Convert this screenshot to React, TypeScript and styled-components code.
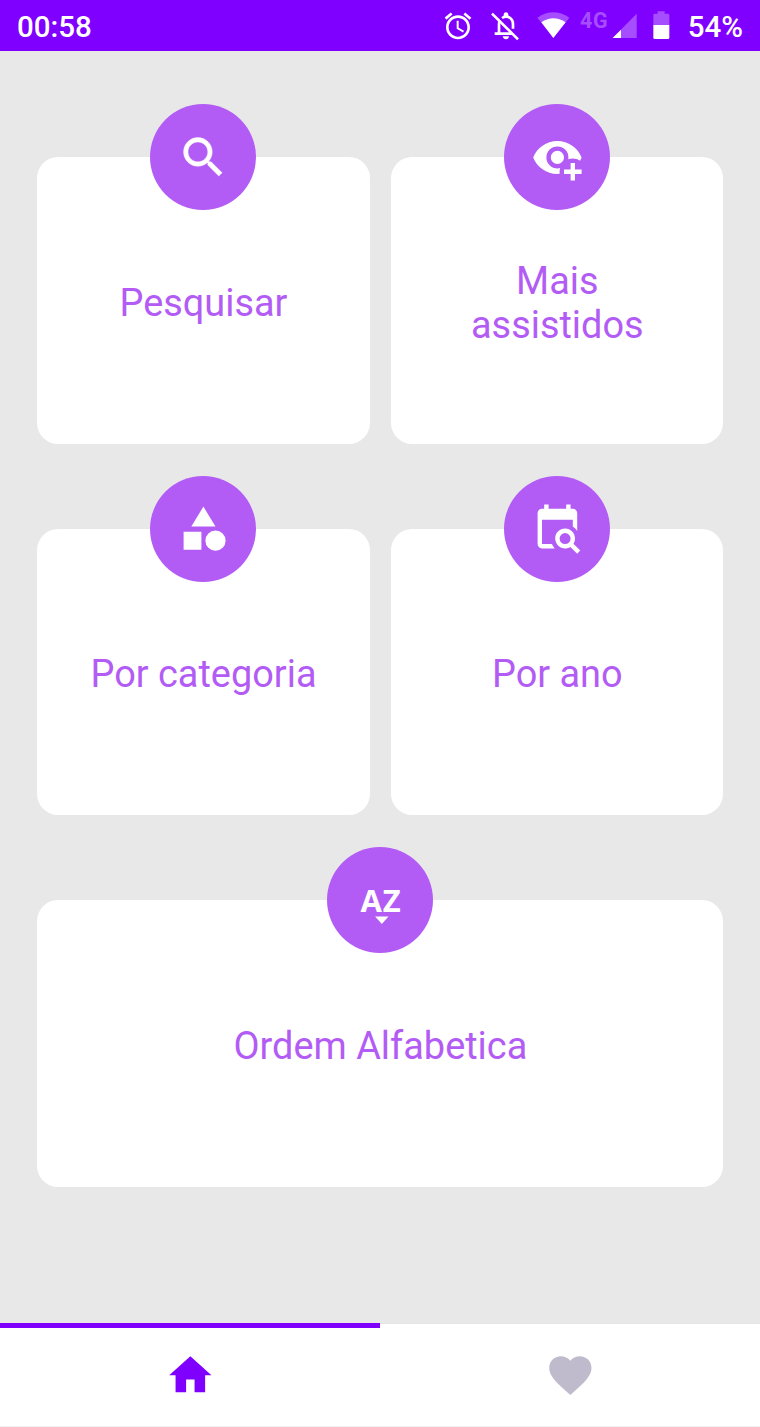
import React from 'react';
import styled, { createGlobalStyle } from 'styled-components';

const GlobalStyle = createGlobalStyle`
  * { box-sizing: border-box; }
  body { margin: 0; background: #e8e8e8; font-family: Roboto, sans-serif; }
`;

const Screen = styled.div`
  display: flex;
  flex-direction: column;
  width: 760px;
  height: 1427px;
  background: #e8e8e8;
  overflow: hidden;
`;

const StatusBar = styled.header`
  display: flex;
  justify-content: space-between;
  align-items: center;
  height: 51px;
  flex: none;
  padding: 0 17px;
  background: #8000ff;
  color: #fff;
`;

const StatusText = styled.span`
  font-size: 29.5px;
  font-weight: 500;
  line-height: 36px;
  padding-top: 2px;
`;

const StatusIcons = styled.div`
  display: flex;
  align-items: center;
`;

const StatusGlyph = styled.svg<{ $gap: number }>`
  display: block;
  flex: none;
  margin-right: ${({ $gap }) => $gap}px;
`;

const NetworkType = styled.span`
  width: 31.8px;
  height: 32px;
  font-size: 21.5px;
  font-weight: 700;
  line-height: 21px;
  letter-spacing: 0.8px;
  color: #a64dff;
`;

const Menu = styled.main`
  flex: 1;
  display: grid;
  grid-template-columns: repeat(2, minmax(0, 1fr));
  grid-auto-rows: 286.5px;
  align-content: start;
  gap: 85.1px 21.6px;
  padding: 106px 36.6px 0 37.4px;
`;

const Card = styled.button<{ $wide?: boolean }>`
  position: relative;
  display: flex;
  align-items: center;
  justify-content: center;
  grid-column: ${({ $wide }) => ($wide ? '1 / -1' : 'auto')};
  border: 0;
  border-radius: 21px;
  padding: 5.5px 60px 0;
  background: #fff;
  font-family: inherit;
`;

const CardLabel = styled.span<{ $nowrap: boolean }>`
  font-size: 37.9px;
  line-height: 44.5px;
  color: #b35cf5;
  text-align: center;
  white-space: ${({ $nowrap }) => ($nowrap ? 'nowrap' : 'normal')};
`;

const Badge = styled.span`
  position: absolute;
  top: -53px;
  left: 50%;
  display: flex;
  align-items: center;
  justify-content: center;
  width: 106px;
  height: 106px;
  transform: translateX(-50%);
  border-radius: 50%;
  background: #b35cf5;
`;

const BadgeIcon = styled.svg`
  display: block;
  width: 52.8px;
  height: 52.8px;
  fill: #fff;
`;

const SortText = styled.text`
  font-family: 'Open Sans', sans-serif;
  font-size: 14.1px;
  font-weight: 700;
`;

const TabBar = styled.nav`
  display: flex;
  flex: none;
  height: 104px;
  background: #fff;
  border-bottom: 1px solid #f0f0f0;
`;

const Tab = styled.button<{ $active?: boolean }>`
  flex: 1;
  display: flex;
  align-items: center;
  justify-content: center;
  border: 0;
  border-top: ${({ $active }) => ($active ? '5px solid #8000ff' : '1px solid #e4e4e4')};
  padding: ${({ $active }) => ($active ? '0 0 3px' : '1px 0 0')};
  background: transparent;
  color: ${({ $active }) => ($active ? '#8000ff' : '#c0bbcc')};
`;

const TabIcon = styled.svg`
  display: block;
  width: 50.7px;
  height: 50.7px;
  fill: currentColor;
`;

const items = [
  {
    label: 'Pesquisar',
    icon: (
      <path d="M15.5 14h-.79l-.28-.27C15.41 12.59 16 11.11 16 9.5 16 5.91 13.09 3 9.5 3S3 5.91 3 9.5 5.91 16 9.5 16c1.61 0 3.09-.59 4.23-1.57l.27.28v.79l5 4.99L20.49 19l-4.99-5zm-6 0C7.01 14 5 11.99 5 9.5S7.01 5 9.5 5 14 7.01 14 9.5 11.99 14 9.5 14z" stroke="#fff" strokeWidth=".2" />
    ),
  },
  {
    label: 'Mais assistidos',
    wrap: true,
    icon: (
      <path d="M12,4.5C7,4.5 2.73,7.61 1,12C2.73,16.39 7,19.5 12,19.5C12.36,19.5 12.72,19.5 13.08,19.45C13.03,19.13 13,18.82 13,18.5C13,17.94 13.08,17.38 13.24,16.84C12.83,16.94 12.42,17 12,17A5,5 0 0,1 7,12A5,5 0 0,1 12,7A5,5 0 0,1 17,12C17,12.29 16.97,12.59 16.92,12.88C17.58,12.63 18.29,12.5 19,12.5C20.17,12.5 21.31,12.84 22.29,13.5C22.56,13 22.8,12.5 23,12C21.27,7.61 17,4.5 12,4.5M12,9A3,3 0 0,0 9,12A3,3 0 0,0 12,15A3,3 0 0,0 15,12A3,3 0 0,0 12,9M18,14.5V17.5H15V19.5H18V22.5H20V19.5H23V17.5H20V14.5H18Z" />
    ),
  },
  {
    label: 'Por categoria',
    icon: (
      <path d="M11.1,13.5V21.7H3V13.5H11.1M12,2.1L17.5,11.1H6.5L12,2.1M17.5,13A4.6,4.6 0 0,1 17.5,22.2A4.6,4.6 0 0,1 17.5,13Z" />
    ),
  },
  {
    label: 'Por ano',
    icon: (
      <path transform="translate(0 .1)" d="M15.5,12C18,12 20,14 20,16.5C20,17.38 19.75,18.21 19.31,18.9L22.39,22L21,23.39L17.88,20.32C17.19,20.75 16.37,21 15.5,21C13,21 11,19 11,16.5C11,14 13,12 15.5,12M15.5,14A2.5,2.5 0 0,0 13,16.5A2.5,2.5 0 0,0 15.5,19A2.5,2.5 0 0,0 18,16.5A2.5,2.5 0 0,0 15.5,14M19,8H5V19H9.5C9.81,19.75 10.26,20.42 10.81,21H5C3.89,21 3,20.1 3,19V5C3,3.89 3.89,3 5,3H6V1H8V3H16V1H18V3H19A2,2 0 0,1 21,5V13.03C20.5,12.22 19.8,11.54 19,11V8Z" />
    ),
  },
  {
    label: 'Ordem Alfabetica',
    wide: true,
    icon: (
      <>
        <SortText x="3 13.1" y="17.3">AZ</SortText>
        <path d="M9.6 19.3h6.1l-3.05 3.4z" />
      </>
    ),
  },
];

export default function App() {
  return (
    <>
      <GlobalStyle />
      <Screen>
        <StatusBar>
          <StatusText>00:58</StatusText>
          <StatusIcons>
            <StatusGlyph $gap={16} width="32" height="32" viewBox="0 0 24 24" fill="#fff">
              <path d="M22 5.72l-4.6-3.86-1.29 1.53 4.6 3.86L22 5.72zM7.88 3.39L6.6 1.86 2 5.71l1.29 1.53 4.59-3.85zM12.5 8H11v6l4.75 2.85.75-1.23-4-2.37V8zM12 4c-4.97 0-9 4.03-9 9s4.02 9 9 9c4.97 0 9-4.03 9-9s-4.03-9-9-9zm0 16c-3.87 0-7-3.13-7-7s3.13-7 7-7 7 3.13 7 7-3.13 7-7 7z" />
            </StatusGlyph>
            <StatusGlyph $gap={17.2} width="30" height="32" viewBox="180 30 90 96" fill="none" stroke="#fff">
              <path d="M194 101H246M207 101V72Q207 65 210 61M216 54Q228 46 239 53Q249 59 249 73V86" strokeWidth="8" />
              <path d="M186 41L264 118" strokeWidth="8" />
              <path d="M221 50V43Q222 37 228 37T235 43V50ZM218 109H237Q236 118 228 118T218 109Z" fill="#fff" stroke="none" />
            </StatusGlyph>
            <StatusGlyph $gap={9.5} width="33" height="32" viewBox="323 30 99 96">
              <path d="M324 53Q372 21 420 53L372 113Z" fill="#a64dff" />
              <path d="M336 67Q372 43 409 67L372 114Z" fill="#fff" />
            </StatusGlyph>
            <NetworkType>4G</NetworkType>
            <StatusGlyph $gap={16.5} width="25" height="32" viewBox="547 30 75 96">
              <path d="M549 114L621 41V114Z" fill="#a64dff" />
              <path d="M549 114L574 89V114Z" fill="#fff" />
            </StatusGlyph>
            <StatusGlyph $gap={17.5} width="17" height="32" viewBox="673 30 51 96">
              <path d="M687 34H708V41H718Q722 41 722 45V76H674V45Q674 41 678 41H687Z" fill="#a64dff" />
              <path d="M674 75H722V113Q722 117 718 117H678Q674 117 674 113Z" fill="#fff" />
            </StatusGlyph>
            <StatusText>54%</StatusText>
          </StatusIcons>
        </StatusBar>
        <Menu>
          {items.map(({ label, icon, wide, wrap }) => (
            <Card key={label} $wide={wide}>
              <Badge>
                <BadgeIcon viewBox="0 0 24 24">{icon}</BadgeIcon>
              </Badge>
              <CardLabel $nowrap={!wrap}>{label}</CardLabel>
            </Card>
          ))}
        </Menu>
        <TabBar>
          <Tab $active aria-label="Home">
            <TabIcon viewBox="0 0 24 24">
              <path d="M10 20v-6h4v6h5v-8h3L12 3 2 12h3v8z" />
            </TabIcon>
          </Tab>
          <Tab aria-label="Favoritos">
            <TabIcon viewBox="0 0 24 24">
              <path d="M12 21.35l-1.45-1.32C5.4 15.36 2 12.28 2 8.5 2 5.42 4.42 3 7.5 3c1.74 0 3.41.81 4.5 2.09C13.09 3.81 14.76 3 16.5 3 19.58 3 22 5.42 22 8.5c0 3.78-3.4 6.86-8.55 11.54L12 21.35z" />
            </TabIcon>
          </Tab>
        </TabBar>
      </Screen>
    </>
  );
}
